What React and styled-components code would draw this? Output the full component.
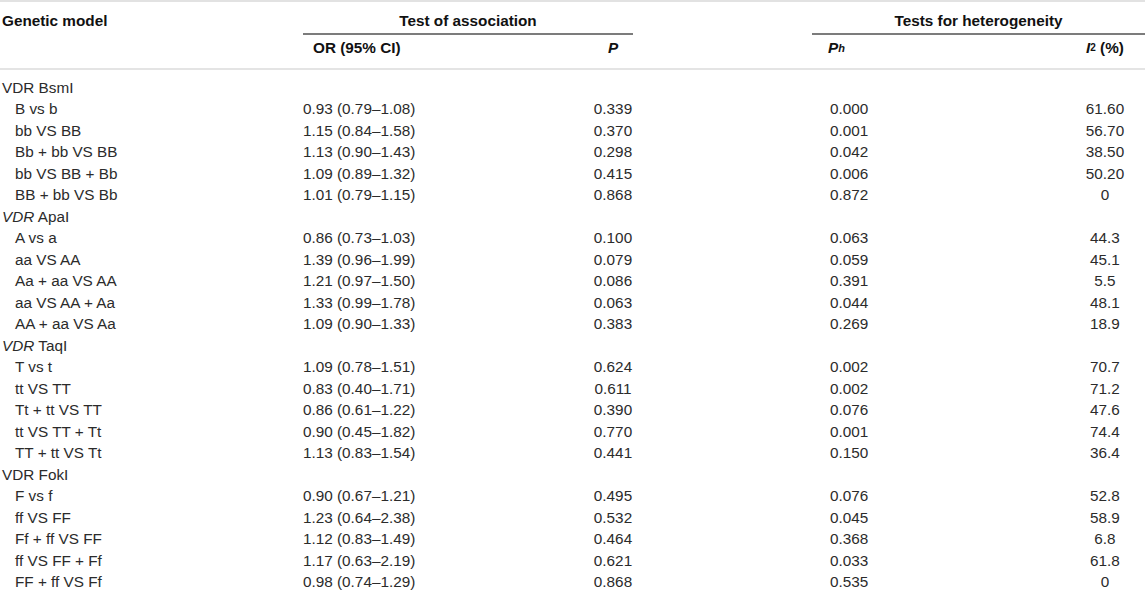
import React from 'react'
import styled, { createGlobalStyle } from 'styled-components'

const GlobalStyle = createGlobalStyle`
  body {
    margin: 0;
    background: #fff;
    font-family: "Liberation Sans", Arial, Helvetica, sans-serif;
  }
`

const COLS = '303px 290px 40px 179px 253px 80px'

const Table = styled.div`
  width: 1145px;
  font-size: 15.3px;
  color: #2b2b2b;
  border-top: 2px solid #e2e2e2;
`

const Head = styled.div`
  display: grid;
  grid-template-columns: ${COLS};
  grid-template-rows: 33px 33px;
  border-bottom: 2px solid #e4e4e4;
  font-weight: bold;
  color: #111;
`

const HeadCell = styled.div`
  display: flex;
  align-items: center;
  justify-content: ${p => (p.$center ? 'center' : 'flex-start')};
  padding-left: ${p => p.$pad || 0}px;
  padding-top: ${p => (p.$row === '1' ? 5 : 0)}px;
  padding-bottom: ${p => (p.$row === '2' ? 7 : 0)}px;
  grid-column: ${p => p.$col || 'auto'};
  grid-row: ${p => p.$row || 'auto'};
  white-space: nowrap;
`

const GroupCell = styled(HeadCell)`
  border-bottom: 2px solid #7c7c7c;
  padding-top: 7px;
`

const Sub = styled.sub`
  font-size: 11px;
  vertical-align: -4px;
  line-height: 0;
`

const Sup = styled.sup`
  font-size: 10px;
  vertical-align: 6px;
  line-height: 0;
`

const Body = styled.div`
  padding-top: 7px;
`

const Row = styled.div`
  display: grid;
  grid-template-columns: ${COLS};
  height: 21.5px;
  align-items: center;
  white-space: nowrap;
`

const Label = styled.div`
  padding-left: ${p => (p.$sub ? 15 : 2)}px;
`

const OrCell = styled.div``

const Centered = styled.div`
  text-align: center;
  grid-column: ${p => p.$col};
`

const PhCell = styled.div`
  grid-column: 5;
  padding-left: 18px;
`

const Var = styled.i`
  font-style: italic;
`

const groups = [
  {
    gene: 'BsmI', italic: false,
    rows: [
      ['B vs b', '0.93 (0.79–1.08)', '0.339', '0.000', '61.60'],
      ['bb VS BB', '1.15 (0.84–1.58)', '0.370', '0.001', '56.70'],
      ['Bb + bb VS BB', '1.13 (0.90–1.43)', '0.298', '0.042', '38.50'],
      ['bb VS BB + Bb', '1.09 (0.89–1.32)', '0.415', '0.006', '50.20'],
      ['BB + bb VS Bb', '1.01 (0.79–1.15)', '0.868', '0.872', '0'],
    ],
  },
  {
    gene: 'ApaI', italic: true,
    rows: [
      ['A vs a', '0.86 (0.73–1.03)', '0.100', '0.063', '44.3'],
      ['aa VS AA', '1.39 (0.96–1.99)', '0.079', '0.059', '45.1'],
      ['Aa + aa VS AA', '1.21 (0.97–1.50)', '0.086', '0.391', '5.5'],
      ['aa VS AA + Aa', '1.33 (0.99–1.78)', '0.063', '0.044', '48.1'],
      ['AA + aa VS Aa', '1.09 (0.90–1.33)', '0.383', '0.269', '18.9'],
    ],
  },
  {
    gene: 'TaqI', italic: true,
    rows: [
      ['T vs t', '1.09 (0.78–1.51)', '0.624', '0.002', '70.7'],
      ['tt VS TT', '0.83 (0.40–1.71)', '0.611', '0.002', '71.2'],
      ['Tt + tt VS TT', '0.86 (0.61–1.22)', '0.390', '0.076', '47.6'],
      ['tt VS TT + Tt', '0.90 (0.45–1.82)', '0.770', '0.001', '74.4'],
      ['TT + tt VS Tt', '1.13 (0.83–1.54)', '0.441', '0.150', '36.4'],
    ],
  },
  {
    gene: 'FokI', italic: false,
    rows: [
      ['F vs f', '0.90 (0.67–1.21)', '0.495', '0.076', '52.8'],
      ['ff VS FF', '1.23 (0.64–2.38)', '0.532', '0.045', '58.9'],
      ['Ff + ff VS FF', '1.12 (0.83–1.49)', '0.464', '0.368', '6.8'],
      ['ff VS FF + Ff', '1.17 (0.63–2.19)', '0.621', '0.033', '61.8'],
      ['FF + ff VS Ff', '0.98 (0.74–1.29)', '0.868', '0.535', '0'],
    ],
  },
]

export default function App() {
  return (
    <>
      <GlobalStyle />
      <Table>
        <Head>
          <HeadCell $col="1" $row="1" $pad={2}>Genetic model</HeadCell>
          <GroupCell $col="2 / 4" $row="1" $center>Test of association</GroupCell>
          <GroupCell $col="5 / 7" $row="1" $center>Tests for heterogeneity</GroupCell>
          <HeadCell $col="2" $row="2" $pad={10}>OR (95% CI)</HeadCell>
          <HeadCell $col="3" $row="2" $center><Var>P</Var></HeadCell>
          <HeadCell $col="5" $row="2" $pad={16}>
            <Var>P</Var><Sub><Var>h</Var></Sub>
          </HeadCell>
          <HeadCell $col="6" $row="2" $center>
            <Var>I</Var><Sup>2</Sup>&nbsp;(%)
          </HeadCell>
        </Head>
        <Body>
          {groups.map(g => (
            <React.Fragment key={g.gene}>
              <Row>
                <Label>
                  {g.italic ? <Var>VDR</Var> : 'VDR'} {g.gene}
                </Label>
              </Row>
              {g.rows.map(r => (
                <Row key={r[0]}>
                  <Label $sub>{r[0]}</Label>
                  <OrCell>{r[1]}</OrCell>
                  <Centered $col="3">{r[2]}</Centered>
                  <PhCell>{r[3]}</PhCell>
                  <Centered $col="6">{r[4]}</Centered>
                </Row>
              ))}
            </React.Fragment>
          ))}
        </Body>
      </Table>
    </>
  )
}
